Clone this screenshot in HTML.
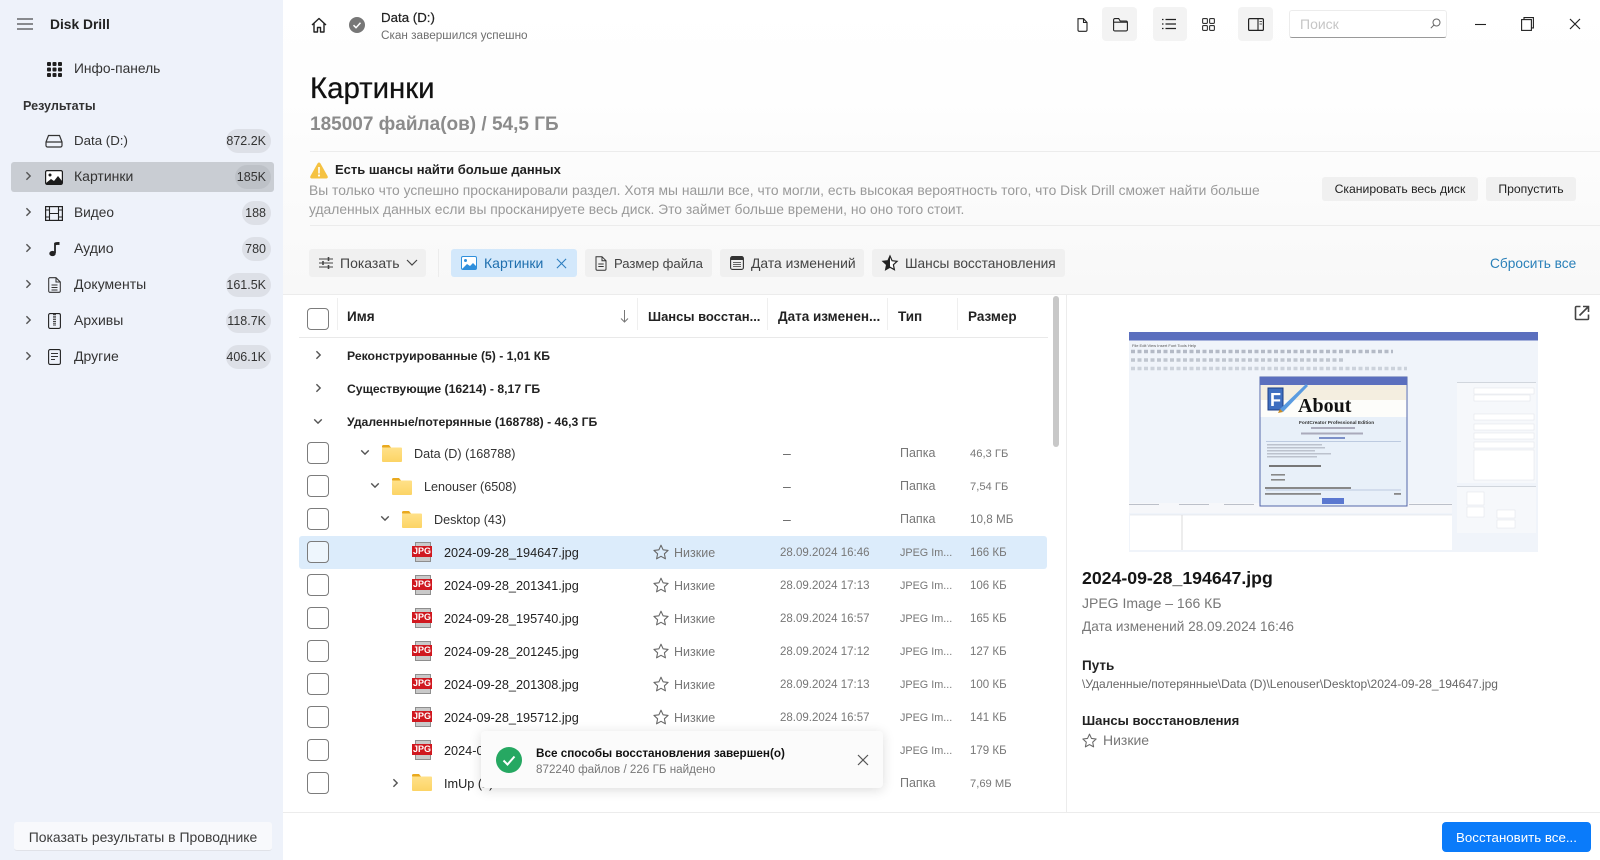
<!DOCTYPE html>
<html lang="ru"><head><meta charset="utf-8"><title>Disk Drill</title>
<style>
html,body{margin:0;padding:0;width:1600px;height:860px;overflow:hidden;background:#fff;font-family:"Liberation Sans","Noto Sans CJK SC",sans-serif;color:#1b1b1b}
.a{position:absolute}
.t{position:absolute;white-space:nowrap;line-height:20px;height:20px;font-size:14px}
.g{color:#6e6e6e}.b{font-weight:700}
.s{font-size:12.5px;color:#777}
.d{font-size:11.5px;color:#777;margin-top:1px}
.y{font-size:10.8px;color:#777;margin-top:1px}
.z{font-size:11.5px;color:#777;margin-top:1px}
.n{font-size:12.7px;color:#222}
.f{font-size:12.6px;color:#333}
.h{font-size:12.2px;font-weight:700;color:#222}
.badge{position:absolute;height:24px;border-radius:12px;background:#dde0e7;font-size:12.5px;line-height:25px;text-align:right;padding-right:5px;box-sizing:border-box;color:#333}
.chip{position:absolute;top:249px;height:28px;border-radius:3px;background:#f0f0f0;font-size:14px;line-height:28px;color:#444;white-space:nowrap}
.cb{position:absolute;left:307px;width:20px;height:20px;border:1.3px solid #7c7c7c;border-radius:4px;background:#fff}
svg{position:absolute;overflow:visible}
.btn{position:absolute;background:#f0f0f0;border-radius:3px;text-align:center;color:#222;font-size:12.2px;line-height:24px}
.pg{position:absolute;left:415px;width:16px;height:20px;background:#c9c9c9;border:1px solid #8e8e8e;box-sizing:border-box}
.jp{position:absolute;left:412px;width:20px;height:11px;background:#d0181f;color:#fff;font-size:9px;font-weight:700;line-height:11px;text-align:center}
</style></head><body>
<svg width="0" height="0" style="position:absolute"><defs>
<symbol id="star" viewBox="0 0 16 16" overflow="visible"><path d="M8 1.200l2.100 4.600 5 .6-3.700 3.400 1 5L8 12.300l-4.400 2.500 1-5L.9 6.400l5-.6z" fill="none" stroke="#666" stroke-width="1.100" stroke-linejoin="round"/></symbol>
<linearGradient id="fg" x1="0" y1="0" x2="0" y2="1"><stop offset="0" stop-color="#ffe189"/><stop offset="1" stop-color="#fcd465"/></linearGradient>
<symbol id="folder" viewBox="0 0 20 17" overflow="visible"><path d="M0 1.500Q0 0 1.500 0H7l2 2.500h-9z" fill="#e9a91f"/><rect x="0" y="2.500" width="20" height="14.500" rx="1" fill="url(#fg)"/></symbol>
<symbol id="cr" viewBox="0 0 8 12" overflow="visible"><path d="M1.500 1.500L6 6l-4.500 4.500" fill="none" stroke="#555" stroke-width="1.700"/></symbol>
<symbol id="cd" viewBox="0 0 12 8" overflow="visible"><path d="M1.500 1.500L6 6l4.500-4.500" fill="none" stroke="#555" stroke-width="1.700"/></symbol>
<symbol id="x" viewBox="0 0 12 12" overflow="visible"><path d="M1 1l10 10M11 1L1 11" fill="none" stroke="currentColor" stroke-width="1.200"/></symbol>
</defs></svg>

<!-- sidebar -->
<div class="a" style="left:0;top:0;width:283px;height:860px;background:#eef2fa"></div>
<svg style="left:17px;top:18px" width="16" height="12"><path d="M0 1h16M0 6h16M0 11h16" stroke="#222" stroke-width="1.100"/></svg>
<div class="t b" style="left:50px;top:15px;font-size:13.800px;color:#222">Disk Drill</div>
<svg style="left:47px;top:62px" width="15" height="15"><g fill="#1f1f1f"><rect x="0" y="0" width="4" height="4" rx="1"/><rect x="5.500" y="0" width="4" height="4" rx="1"/><rect x="11" y="0" width="4" height="4" rx="1"/><rect x="0" y="5.500" width="4" height="4" rx="1"/><rect x="5.500" y="5.500" width="4" height="4" rx="1"/><rect x="11" y="5.500" width="4" height="4" rx="1"/><rect x="0" y="11" width="4" height="4" rx="1"/><rect x="5.500" y="11" width="4" height="4" rx="1"/><rect x="11" y="11" width="4" height="4" rx="1"/></g></svg>
<div class="t" style="left:74px;top:59px;color:#333;font-size:13.800px">Инфо-панель</div>
<div class="t b" style="left:23px;top:96px;font-size:12.600px;color:#333">Результаты</div>

<div class="a" style="left:11px;top:162px;width:263px;height:30px;background:#c9cdd3;border-radius:3px"></div>
<div class="t" style="left:74px;top:131px;color:#333;font-size:13.300px">Data (D:)</div>
<div class="t" style="left:74px;top:166px;color:#333">Картинки</div>
<div class="t" style="left:74px;top:203px;color:#333;font-size:13.700px">Видео</div>
<div class="t" style="left:74px;top:238px;color:#333">Аудио</div>
<div class="t" style="left:74px;top:274px;color:#333">Документы</div>
<div class="t" style="left:74px;top:310px;color:#333">Архивы</div>
<div class="t" style="left:74px;top:346px;color:#333">Другие</div>
<div class="badge" style="left:226px;top:129px;width:45px">872.2K</div>
<div class="badge" style="left:235px;top:165px;width:36px;background:#bdc1c7">185K</div>
<div class="badge" style="left:242px;top:201px;width:29px">188</div>
<div class="badge" style="left:242px;top:237px;width:29px">780</div>
<div class="badge" style="left:226px;top:273px;width:45px">161.5K</div>
<div class="badge" style="left:226px;top:309px;width:45px">118.7K</div>
<div class="badge" style="left:226px;top:345px;width:45px">406.1K</div>
<svg style="left:25px;top:171px" width="7" height="10"><use href="#cr" width="7" height="10"/></svg>
<svg style="left:25px;top:207px" width="7" height="10"><use href="#cr" width="7" height="10"/></svg>
<svg style="left:25px;top:243px" width="7" height="10"><use href="#cr" width="7" height="10"/></svg>
<svg style="left:25px;top:279px" width="7" height="10"><use href="#cr" width="7" height="10"/></svg>
<svg style="left:25px;top:315px" width="7" height="10"><use href="#cr" width="7" height="10"/></svg>
<svg style="left:25px;top:351px" width="7" height="10"><use href="#cr" width="7" height="10"/></svg>
<!-- drive -->
<svg style="left:45px;top:134px" width="18" height="14"><path d="M3.500 1.500h11L17 8v3.500a1.500 1.500 0 0 1-1.500 1.500h-13A1.500 1.500 0 0 1 1 11.500V8zM1 8h16" fill="none" stroke="#333" stroke-width="1.200"/></svg>
<!-- picture -->
<svg style="left:45px;top:170px" width="18" height="15"><rect x=".6" y=".6" width="16.800" height="13.800" rx="1.500" fill="#fff" stroke="#1b1b1b" stroke-width="1.200"/><circle cx="5" cy="5" r="1.500" fill="#1b1b1b"/><path d="M1 13l5-4 3 2 4-5 4 5v3H1z" fill="#1b1b1b"/></svg>
<!-- film -->
<svg style="left:45px;top:206px" width="18" height="15"><rect x=".6" y=".6" width="16.800" height="13.800" fill="none" stroke="#222" stroke-width="1.200"/><path d="M4.500 1v13M13.500 1v13M4.500 7.500h9M1 4h3.500M1 11h3.500M13.500 4H17M13.500 11H17" stroke="#222" stroke-width="1.100"/></svg>
<!-- note -->
<svg style="left:49px;top:241px" width="11" height="16"><path d="M6 2v10" stroke="#222" stroke-width="1.800"/><path d="M5.500 1.500Q8 .8 10.500 1v3Q8 3.500 6 4.500z" fill="#222"/><ellipse cx="3.500" cy="12.500" rx="3.200" ry="2.600" fill="#222"/></svg>
<!-- doc -->
<svg style="left:48px;top:277px" width="13" height="16"><path d="M1.500.7h6.500l4.300 4.300v9a1.300 1.300 0 0 1-1.300 1.300H1.500A1.300 1.300 0 0 1 .7 14V1.500zM8 .7V5h4.300M3.500 8h6M3.500 10.500h6M3.500 13h6" fill="none" stroke="#333" stroke-width="1.050"/></svg>
<!-- archive -->
<svg style="left:48px;top:313px" width="13" height="16"><rect x=".6" y=".6" width="11.800" height="14.800" rx="1.500" fill="none" stroke="#222" stroke-width="1.100"/><path d="M6.500 1v12" stroke="#444" stroke-width="3" stroke-dasharray="1.300 1"/></svg>
<!-- other -->
<svg style="left:48px;top:349px" width="13" height="16"><rect x=".6" y=".6" width="11.800" height="14.800" rx="1.500" fill="none" stroke="#222" stroke-width="1.100"/><path d="M3 4.500h7M3 7.500h7M3 10.500h4" stroke="#333" stroke-width="1.050"/></svg>

<div class="a" style="left:14px;top:822px;width:258px;height:28px;background:#f8f9fc;border-bottom:1px solid #e0e2e8;border-radius:3px;text-align:center;line-height:31px;font-size:13.950px;color:#3d3d3d">Показать результаты в Проводнике</div>

<!-- main header -->
<div class="a" style="left:283px;top:0;width:1317px;height:294px;background:linear-gradient(#fff 0,#fefefe 90px,#f8f8f8 294px)"></div>
<div class="a" style="left:310px;top:151px;width:1290px;height:1px;background:#ececec"></div>
<div class="a" style="left:310px;top:225px;width:1290px;height:1px;background:#ececec"></div>
<div class="a" style="left:283px;top:294px;width:1317px;height:1px;background:#ececec"></div>

<svg style="left:311px;top:17px" width="16" height="16"><path d="M1 8l7-6.500L15 8M3 6.500V15h3.500v-4.500h3V15H13V6.500" fill="none" stroke="#222" stroke-width="1.400" stroke-linejoin="round"/></svg>
<svg style="left:349px;top:17px" width="16" height="16"><circle cx="8" cy="8" r="8" fill="#777"/><path d="M4.500 8.200l2.500 2.500 4.500-5" fill="none" stroke="#fff" stroke-width="1.500"/></svg>
<div class="t" style="left:381px;top:8px;font-size:13.300px;color:#222;-webkit-text-stroke:.2px #222">Data (D:)</div>
<div class="t g" style="left:381px;top:26px;font-size:11.750px">Скан завершился успешно</div>
<div class="t" style="left:310px;top:69px;font-size:29.400px;line-height:40px;height:40px;color:#111;-webkit-text-stroke:.25px #111">Картинки</div>
<div class="t b" style="left:310px;top:112px;font-size:19px;line-height:26px;height:26px;color:#8b8b8b">185007 файла(ов) / 54,5 ГБ</div>

<svg style="left:310px;top:162px" width="18" height="17"><path d="M9 .5q1 0 1.500 1L17.500 14q1 2-1 2.500h-15q-2-.5-1-2.500L7.500 1.500Q8 .5 9 .5z" fill="#f5c242"/><rect x="8.200" y="5" width="1.600" height="6.500" fill="#fff"/><circle cx="9" cy="13.500" r="1.100" fill="#fff"/></svg>
<div class="t b" style="left:335px;top:160px;font-size:13px;color:#222">Есть шансы найти больше данных</div>
<div class="t" style="left:309px;top:180px;font-size:13.850px;color:#999">Вы только что успешно просканировали раздел. Хотя мы нашли все, что могли, есть высокая вероятность того, что Disk Drill сможет найти больше</div>
<div class="t" style="left:309px;top:199px;font-size:13.850px;color:#999">удаленных данных если вы просканируете весь диск. Это займет больше времени, но оно того стоит.</div>
<div class="btn" style="left:1322px;top:177px;width:156px;height:24px">Сканировать весь диск</div>
<div class="btn" style="left:1486px;top:177px;width:90px;height:24px">Пропустить</div>

<!-- top right tools -->
<div class="a" style="left:1102px;top:7px;width:35px;height:34px;background:#f3f3f3;border-radius:4px"></div>
<div class="a" style="left:1153px;top:7px;width:34px;height:34px;background:#f3f3f3;border-radius:4px"></div>
<div class="a" style="left:1238px;top:7px;width:35px;height:34px;background:#f3f3f3;border-radius:4px"></div>
<svg style="left:1077px;top:18px" width="11" height="14"><path d="M1 .7h5.500L10 4.500V12a1.300 1.300 0 0 1-1.300 1.300H2.300A1.300 1.300 0 0 1 1 12zM6.500.7v3.800H10" fill="none" stroke="#222" stroke-width="1.100"/></svg>
<svg style="left:1113px;top:18px" width="15" height="13"><path d="M.6 2a1.300 1.300 0 0 1 1.300-1.400h3.800l1.500 2.400h6a1.200 1.200 0 0 1 1.200 1.200v7.500a1.200 1.200 0 0 1-1.200 1.200H1.800A1.200 1.200 0 0 1 .6 11.300zM.8 4.200h13.400" fill="none" stroke="#222" stroke-width="1.100"/></svg>
<svg style="left:1162px;top:18px" width="14" height="12"><path d="M0 1.500h1.500M0 6h1.500M0 10.500h1.500M3.500 1.500H14M3.500 6H14M3.500 10.500H14" stroke="#222" stroke-width="1.200"/></svg>
<svg style="left:1202px;top:18px" width="13" height="13"><g fill="none" stroke="#333" stroke-width="1.100"><rect x=".6" y=".6" width="4.800" height="4.800" rx="1"/><rect x="7.600" y=".6" width="4.800" height="4.800" rx="1"/><rect x=".6" y="7.600" width="4.800" height="4.800" rx="1"/><rect x="7.600" y="7.600" width="4.800" height="4.800" rx="1"/></g></svg>
<svg style="left:1248px;top:18px" width="16" height="13"><rect x=".6" y=".6" width="14.800" height="11.800" rx="1.200" fill="none" stroke="#222" stroke-width="1.200"/><path d="M10 1v11" stroke="#222" stroke-width="1.100"/><path d="M11.500 3.500h2.500M11.500 6h2.500" stroke="#555" stroke-width=".9"/></svg>
<div class="a" style="left:1289px;top:10px;width:158px;height:28px;background:#fff;border:1px solid #ececec;border-bottom:1px solid #999;border-radius:3px;box-sizing:border-box"></div>
<div class="t" style="left:1300px;top:14px;color:#c6c6c6;font-size:14px">Поиск</div>
<svg style="left:1430px;top:18px" width="11" height="11"><circle cx="6.500" cy="4.500" r="3.500" fill="none" stroke="#666" stroke-width="1"/><path d="M4 7L.8 10.200" stroke="#666" stroke-width="1"/></svg>
<svg style="left:1475px;top:24px" width="11" height="2"><path d="M0 .5h11" stroke="#222" stroke-width="1.100"/></svg>
<svg style="left:1521px;top:17px" width="13" height="14"><rect x=".6" y="2.600" width="9.800" height="10.800" fill="#fefefe" stroke="#222" stroke-width="1.100"/><path d="M3 2.500V.6h9.400v10.300h-2" fill="none" stroke="#222" stroke-width="1.100"/></svg>
<svg style="left:1569px;top:18px;color:#222" width="12" height="12"><use href="#x" width="12" height="12"/></svg>

<!-- filter chips -->
<div class="chip" style="left:309px;width:117px;padding-left:31px;box-sizing:border-box">Показать</div>
<svg style="left:319px;top:257px" width="14" height="12"><path d="M0 2h14M0 6h14M0 10h14" stroke="#444" stroke-width="1"/><path d="M9.500 0v4M4 4v4M9.500 8v4" stroke="#444" stroke-width="1.600"/></svg>
<svg style="left:406px;top:259px" width="12" height="8"><path d="M1 1l5 5 5-5" fill="none" stroke="#444" stroke-width="1.200"/></svg>
<div class="a" style="left:438px;top:249px;width:1px;height:28px;background:#ececec"></div>
<div class="chip" style="left:451px;width:126px;background:#d3e8fb;color:#1f6fae;padding-left:33px;box-sizing:border-box">Картинки</div>
<svg style="left:461px;top:256px" width="16" height="14"><rect x=".5" y=".5" width="15" height="13" rx="1.500" fill="#fff" stroke="#2f8fdc"/><circle cx="4.500" cy="4.500" r="1.500" fill="#2f8fdc"/><path d="M1 13l5-5 3 2 3-3 3 3v3z" fill="#2f8fdc"/></svg>
<svg style="left:556px;top:258px;color:#2f7fc0" width="11" height="11"><use href="#x" width="11" height="11"/></svg>
<div class="chip" style="left:585px;width:127px;padding-left:29px;box-sizing:border-box;font-size:13.100px;line-height:30px">Размер файла</div>
<svg style="left:595px;top:256px" width="12" height="15"><path d="M1 .7h6l4 4V13a1.300 1.300 0 0 1-1.300 1.300H2.300A1.300 1.300 0 0 1 1 13zM7 .7v4h4M3.300 8h5.400M3.300 10.500h5.400" fill="none" stroke="#333" stroke-width="1"/></svg>
<div class="chip" style="left:720px;width:144px;padding-left:31px;box-sizing:border-box;font-size:13.900px">Дата изменений</div>
<svg style="left:730px;top:256px" width="14" height="14"><rect x=".6" y=".6" width="12.800" height="12.800" rx="1.800" fill="none" stroke="#333" stroke-width="1.100"/><rect x="1" y="1" width="12" height="3" fill="#333"/><path d="M3 6.500h8M3 8.500h8M3 10.500h8" stroke="#666" stroke-width="1"/></svg>
<div class="chip" style="left:872px;width:193px;padding-left:33px;box-sizing:border-box;font-size:13.700px;line-height:30px">Шансы восстановления</div>
<svg style="left:882px;top:255px" width="16" height="16"><path d="M8 1l2.100 4.700 5 .6-3.700 3.400 1 5L8 12.200l-4.400 2.500 1-5L.9 6.300l5-.6z" fill="#fff" stroke="#222" stroke-width="1.200"/><path d="M8 1v11.200l-4.400 2.500 1-5L.9 6.300l5-.6z" fill="#222"/></svg>
<div class="t" style="left:1490px;top:254px;color:#2a80b9;font-size:13.700px">Сбросить все</div>

<!-- table -->
<div class="cb" style="top:308px"></div>
<div class="a" style="left:337px;top:298px;width:1px;height:32px;background:#efefef"></div>
<div class="a" style="left:637px;top:298px;width:1px;height:32px;background:#efefef"></div>
<div class="a" style="left:767px;top:298px;width:1px;height:32px;background:#efefef"></div>
<div class="a" style="left:887px;top:298px;width:1px;height:32px;background:#efefef"></div>
<div class="a" style="left:957px;top:298px;width:1px;height:32px;background:#efefef"></div>
<div class="a" style="left:299px;top:337px;width:749px;height:1px;background:#e9e9e9"></div>
<div class="t" style="left:347px;top:307px;color:#222;font-size:13.500px;font-weight:700">Имя</div>
<svg style="left:620px;top:310px" width="9" height="13"><path d="M4.500 0v12M1 8.500l3.500 3.500L8 8.500" fill="none" stroke="#777" stroke-width="1"/></svg>
<div class="t b" style="left:648px;top:307px;font-size:13px;color:#222">Шансы восстан...</div>
<div class="t b" style="left:778px;top:307px;font-size:13.500px;color:#222">Дата изменен...</div>
<div class="t b" style="left:898px;top:307px;font-size:13.500px;color:#222">Тип</div>
<div class="t b" style="left:968px;top:307px;font-size:13.500px;color:#222">Размер</div>
<div class="a" style="left:1053px;top:296px;width:6px;height:151px;background:#c8c8c8;border-radius:3px"></div>
<div class="a" style="left:1066px;top:295px;width:1px;height:517px;background:#ececec"></div>
<div class="a" style="left:283px;top:812px;width:1317px;height:1px;background:#ececec"></div>

<svg style="left:315px;top:350px" width="7" height="10"><use href="#cr" width="7" height="10"/></svg>
<svg style="left:315px;top:383px" width="7" height="10"><use href="#cr" width="7" height="10"/></svg>
<svg style="left:313px;top:418px" width="10" height="7"><use href="#cd" width="10" height="7"/></svg>
<div class="t h" style="left:347px;top:346px">Реконструированные (5) - 1,01 КБ</div>
<div class="t h" style="left:347px;top:379px">Существующие (16214) - 8,17 ГБ</div>
<div class="t h" style="left:347px;top:412px">Удаленные/потерянные (168788) - 46,3 ГБ</div>

<div class="a" style="left:299px;top:536px;width:748px;height:33px;background:#dcecfb;border-radius:3px"></div>

<div class="cb" style="top:442px"></div><div class="cb" style="top:475px"></div><div class="cb" style="top:508px"></div>
<div class="cb" style="top:541px;background:#eef6fd"></div><div class="cb" style="top:574px"></div><div class="cb" style="top:607px"></div>
<div class="cb" style="top:640px"></div><div class="cb" style="top:673px"></div><div class="cb" style="top:706px"></div>
<div class="cb" style="top:739px"></div><div class="cb" style="top:772px"></div>

<svg style="left:360px;top:449px" width="10" height="7"><use href="#cd" width="10" height="7"/></svg>
<svg style="left:382px;top:445px" width="20" height="17"><use href="#folder" width="20" height="17"/></svg>
<div class="t f" style="left:414px;top:444px">Data (D) (168788)</div>
<svg style="left:370px;top:482px" width="10" height="7"><use href="#cd" width="10" height="7"/></svg>
<svg style="left:392px;top:478px" width="20" height="17"><use href="#folder" width="20" height="17"/></svg>
<div class="t f" style="left:424px;top:477px">Lenouser (6508)</div>
<svg style="left:380px;top:515px" width="10" height="7"><use href="#cd" width="10" height="7"/></svg>
<svg style="left:402px;top:511px" width="20" height="17"><use href="#folder" width="20" height="17"/></svg>
<div class="t f" style="left:434px;top:510px">Desktop (43)</div>

<div class="t" style="left:783px;top:443px;color:#666">–</div><div class="t s" style="left:900px;top:443px">Папка</div><div class="t z" style="left:970px;top:443px;font-size:11.200px">46,3 ГБ</div>
<div class="t" style="left:783px;top:476px;color:#666">–</div><div class="t s" style="left:900px;top:476px">Папка</div><div class="t z" style="left:970px;top:476px;font-size:11.200px">7,54 ГБ</div>
<div class="t" style="left:783px;top:509px;color:#666">–</div><div class="t s" style="left:900px;top:509px">Папка</div><div class="t z" style="left:970px;top:509px;font-size:11.700px">10,8 МБ</div>

<!-- files -->
<div class="pg" style="top:542px"></div><div class="jp" style="top:546px">JPG</div>
<div class="t n" style="left:444px;top:543px">2024-09-28_194647.jpg</div><svg style="left:653px;top:544px" width="16" height="16"><use href="#star" width="16" height="16"/></svg><div class="t s" style="left:674px;top:543px">Низкие</div><div class="t d" style="left:780px;top:542px">28.09.2024 16:46</div><div class="t y" style="left:900px;top:542px">JPEG Im...</div><div class="t z" style="left:970px;top:542px">166 КБ</div>

<div class="pg" style="top:575px"></div><div class="jp" style="top:579px">JPG</div>
<div class="t n" style="left:444px;top:576px">2024-09-28_201341.jpg</div><svg style="left:653px;top:577px" width="16" height="16"><use href="#star" width="16" height="16"/></svg><div class="t s" style="left:674px;top:576px">Низкие</div><div class="t d" style="left:780px;top:575px">28.09.2024 17:13</div><div class="t y" style="left:900px;top:575px">JPEG Im...</div><div class="t z" style="left:970px;top:575px">106 КБ</div>

<div class="pg" style="top:608px"></div><div class="jp" style="top:612px">JPG</div>
<div class="t n" style="left:444px;top:609px">2024-09-28_195740.jpg</div><svg style="left:653px;top:610px" width="16" height="16"><use href="#star" width="16" height="16"/></svg><div class="t s" style="left:674px;top:609px">Низкие</div><div class="t d" style="left:780px;top:608px">28.09.2024 16:57</div><div class="t y" style="left:900px;top:608px">JPEG Im...</div><div class="t z" style="left:970px;top:608px">165 КБ</div>

<div class="pg" style="top:641px"></div><div class="jp" style="top:645px">JPG</div>
<div class="t n" style="left:444px;top:642px">2024-09-28_201245.jpg</div><svg style="left:653px;top:643px" width="16" height="16"><use href="#star" width="16" height="16"/></svg><div class="t s" style="left:674px;top:642px">Низкие</div><div class="t d" style="left:780px;top:641px">28.09.2024 17:12</div><div class="t y" style="left:900px;top:641px">JPEG Im...</div><div class="t z" style="left:970px;top:641px">127 КБ</div>

<div class="pg" style="top:674px"></div><div class="jp" style="top:678px">JPG</div>
<div class="t n" style="left:444px;top:675px">2024-09-28_201308.jpg</div><svg style="left:653px;top:676px" width="16" height="16"><use href="#star" width="16" height="16"/></svg><div class="t s" style="left:674px;top:675px">Низкие</div><div class="t d" style="left:780px;top:674px">28.09.2024 17:13</div><div class="t y" style="left:900px;top:674px">JPEG Im...</div><div class="t z" style="left:970px;top:674px">100 КБ</div>

<div class="pg" style="top:707px"></div><div class="jp" style="top:711px">JPG</div>
<div class="t n" style="left:444px;top:708px">2024-09-28_195712.jpg</div><svg style="left:653px;top:709px" width="16" height="16"><use href="#star" width="16" height="16"/></svg><div class="t s" style="left:674px;top:708px">Низкие</div><div class="t d" style="left:780px;top:707px">28.09.2024 16:57</div><div class="t y" style="left:900px;top:707px">JPEG Im...</div><div class="t z" style="left:970px;top:707px">141 КБ</div>

<div class="pg" style="top:740px"></div><div class="jp" style="top:744px">JPG</div>
<div class="t n" style="left:444px;top:741px">2024-09-28_201500.jpg</div><div class="t y" style="left:900px;top:740px">JPEG Im...</div><div class="t z" style="left:970px;top:740px">179 КБ</div>

<svg style="left:392px;top:778px" width="7" height="10"><use href="#cr" width="7" height="10"/></svg>
<svg style="left:412px;top:774px" width="20" height="17"><use href="#folder" width="20" height="17"/></svg>
<div class="t n" style="left:444px;top:774px">ImUp (2)</div><div class="t s" style="left:900px;top:773px">Папка</div><div class="t z" style="left:970px;top:773px;font-size:11.200px">7,69 МБ</div>

<!-- toast -->
<div class="a" style="left:481px;top:731px;width:402px;height:57px;background:#fbfbfb;border-radius:4px;box-shadow:0 2px 12px rgba(0,0,0,.14)"></div>
<svg style="left:496px;top:747px" width="26" height="26"><circle cx="13" cy="13" r="13" fill="#26a862"/><path d="M7.500 13.500l4 4 7-8" fill="none" stroke="#fff" stroke-width="2"/></svg>
<div class="t b" style="left:536px;top:744px;font-size:11.700px;color:#111">Все способы восстановления завершен(о)</div>
<div class="t" style="left:536px;top:760px;font-size:11.650px;color:#777">872240 файлов / 226 ГБ найдено</div>
<svg style="left:857px;top:754px;color:#555" width="12" height="12"><use href="#x" width="12" height="12"/></svg>

<!-- preview -->
<svg style="left:1574px;top:305px" width="16" height="16"><path d="M6.500 1.500H2.500a1 1 0 0 0-1 1v11a1 1 0 0 0 1 1h11a1 1 0 0 0 1-1V9.500" fill="none" stroke="#444" stroke-width="1.600"/><path d="M5.500 10.500L14 2M9 1.500h5.500V7" fill="none" stroke="#444" stroke-width="1.600"/></svg>
<svg style="left:1129px;top:332px" width="409" height="220" viewBox="0 0 409 220">
<rect width="409" height="220" fill="#f0f4fa"/>
<rect width="409" height="8.500" fill="#5b6fbe"/>
<text x="3" y="15" font-size="4" fill="#555" font-family="Liberation Sans">File Edit View Insert Font Tools Help</text>
<g fill="none" stroke="#b4bac6" stroke-width="3.500" stroke-dasharray="4 2.500">
<path d="M2 19.500h262"/><path d="M2 28h213" opacity=".8"/><path d="M2 36.500h276" opacity=".6"/>
</g>
<rect x="0" y="171" width="323" height="10" fill="#f6f7fa"/>
<path d="M0 172.500h30M50 172.500h30M95 172.500h30M280 172.500h43" stroke="#bcc0c9" stroke-width="1"/>
<rect x="1" y="183" width="322" height="35" fill="#fff"/>
<path d="M53 183v35" stroke="#ccc" stroke-width=".7"/>
<path d="M1 183h322" stroke="#d8dbe2" stroke-width=".6"/>
<rect x="328" y="50" width="79" height="101" fill="#f6f8fb"/>
<rect x="328" y="154" width="79" height="47" fill="#f6f8fb"/>
<path d="M328 50.500h79M328 154.500h79" stroke="#c5cad4" stroke-width=".8"/>
<g fill="#fff" stroke="#dfe2e8" stroke-width=".5"><rect x="345" y="56" width="60" height="6"/><rect x="345" y="63" width="56" height="6"/><rect x="345" y="82" width="60" height="6"/><rect x="345" y="92" width="60" height="6"/><rect x="345" y="101" width="60" height="6"/><rect x="345" y="110" width="60" height="6"/><rect x="345" y="118" width="60" height="30"/><rect x="338" y="160" width="17" height="13"/><rect x="338" y="175" width="17" height="10"/><rect x="368" y="178" width="18" height="8"/><rect x="368" y="188" width="18" height="8"/></g>
<rect x="131" y="45" width="147" height="129" fill="#e8f0f9" stroke="#5567a9" stroke-width="1"/>
<rect x="131" y="45" width="147" height="8" fill="#5b6fbe"/>
<rect x="131.500" y="53" width="146" height="32" fill="#fdfdfa"/>
<rect x="132" y="53" width="145" height="15" fill="#efe7d4" opacity=".7"/>
<rect x="139" y="56" width="15" height="22" fill="#3f6fc0" stroke="#1e3f86"/><text x="141" y="74" font-size="18" font-weight="700" fill="#fff" font-family="Liberation Sans">F</text>
<path d="M151 77L177 52l2 2-25 26z" fill="#5a9be0"/><path d="M151 77l3 3-5 1z" fill="#c98a20"/>
<text x="169" y="80" font-size="20" font-weight="700" fill="#111" font-family="Liberation Serif">About</text>
<text x="170" y="92" font-size="4.800" font-weight="700" fill="#333" font-family="Liberation Sans">FontCreator Professional Edition</text>
<rect x="182" y="95" width="44" height="2" fill="#aab"/><rect x="172" y="100.500" width="62" height="2" fill="#aab"/><rect x="190" y="105" width="26" height="2" fill="#7d90c8"/>
<path d="M137 109.500h135M137 158h135" stroke="#8fa3c8" stroke-width=".5"/>
<g fill="#bcc2cd"><rect x="138" y="112" width="55" height="1.500"/><rect x="138" y="115" width="58" height="1.500"/><rect x="138" y="118" width="48" height="1.500"/><rect x="138" y="121" width="64" height="1.500"/><rect x="138" y="124" width="50" height="1.500"/></g>
<rect x="140" y="133" width="52" height="2" fill="#777"/><rect x="142" y="142" width="14" height="1.600" fill="#888"/><rect x="142" y="147" width="14" height="1.600" fill="#888"/>
<rect x="136" y="155" width="86" height="2" fill="#888"/><rect x="136" y="161" width="56" height="1.800" fill="#888"/><rect x="265" y="161" width="7" height="1.800" fill="#888"/>
<rect x="193" y="166" width="22" height="6" fill="#5b78d0"/>
</svg>
<div class="t b" style="left:1082px;top:566px;font-size:17.700px;line-height:24px;height:24px;color:#151515">2024-09-28_194647.jpg</div>
<div class="t" style="left:1082px;top:593px;font-size:14px;color:#777">JPEG Image – 166 КБ</div>
<div class="t" style="left:1082px;top:617px;font-size:13.600px;color:#777">Дата изменений 28.09.2024 16:46</div>
<div class="t b" style="left:1082px;top:656px;font-size:13.500px;color:#222">Путь</div>
<div class="t" style="left:1082px;top:674px;font-size:12px;color:#666">\Удаленные/потерянные\Data (D)\Lenouser\Desktop\2024-09-28_194647.jpg</div>
<div class="t b" style="left:1082px;top:711px;font-size:13.100px;color:#222">Шансы восстановления</div>
<svg style="left:1082px;top:733px" width="15" height="15"><use href="#star" width="15" height="15"/></svg>
<div class="t" style="left:1103px;top:730px;font-size:14px;color:#777">Низкие</div>

<div class="a" style="left:1442px;top:822px;width:149px;height:30px;background:#0a7bfa;border-radius:4px;color:#fff;text-align:center;line-height:31px;font-size:13.300px">Восстановить все...</div>
</body></html>
